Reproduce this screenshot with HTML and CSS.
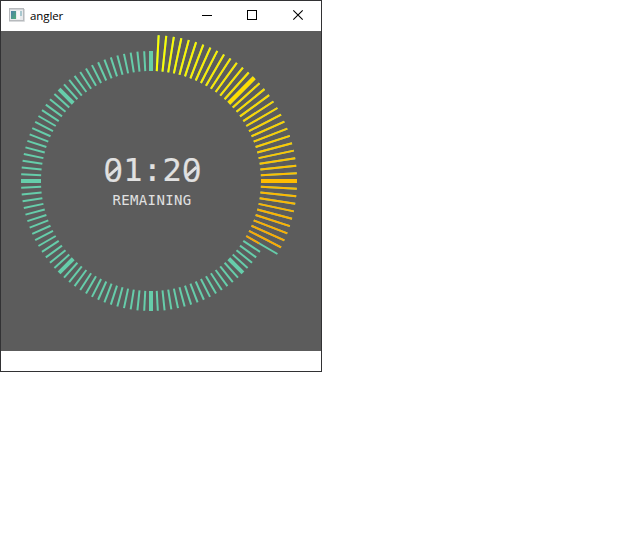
FILE: index.html
```
<!DOCTYPE html>
<html lang="en">
<head>
<meta charset="utf-8">
<title>angler</title>
<link rel="stylesheet" href="styles.css">
</head>
<body>
<div class="window">
  <header class="titlebar">
    <svg class="app-icon" width="16" height="14" viewBox="0 0 16 14">
      <defs><linearGradient id="pane" x1="0" y1="0" x2="1" y2="1"><stop offset="0" stop-color="#4b80a8"/><stop offset="1" stop-color="#50ad78"/></linearGradient></defs>
      <rect x=".5" y=".5" width="14" height="12" fill="#e9ebed" stroke="#b7babd"/>
      <path d="M1 1.5h13" stroke="#cfd2d5"/>
      <rect x="2" y="3" width="5" height="8" fill="url(#pane)"/>
      <rect x="8" y="3" width="3" height="8" fill="#f8f8f8"/>
      <rect x="11" y="3" width="2" height="5" fill="#a9c8cf"/>
      <path d="M0 13.5h15.500V1" fill="none" stroke="#d8dadc"/>
    </svg>
    <span class="title">angler</span>
    <div class="controls">
      <svg width="46" height="30" viewBox="0 0 46 30"><path d="M19 14.500h10" /></svg>
      <svg width="46" height="30" viewBox="0 0 46 30"><path d="M18.500 9.500h9v9h-9z"/></svg>
      <svg width="46" height="30" viewBox="0 0 46 30"><path class="smooth" d="M18.300 9.300l9.400 9.400m0-9.400l-9.400 9.400"/></svg>
    </div>
  </header>
  <main class="dial">
    <svg class="ticks" id="ticks" width="320" height="320" viewBox="0 0 320 320"></svg>
    <div class="readout">
      <div class="time"><span class="zero">0</span><span>1</span><span>:</span><span>2</span><span class="zero">0</span></div>
      <div class="label">REMAINING</div>
    </div>
  </main>
</div>
<script src="ticks.js"></script>
</body>
</html>
```

FILE: styles.css
```
body { margin: 0; background: #fff; }
.window {
  box-sizing: border-box;
  width: 322px;
  height: 372px;
  border: 1px solid #323234;
  background: #fff;
}
.titlebar { display: flex; align-items: center; height: 30px; }
.app-icon { margin: 0 5px 2px 8px; flex: none; }
.title { font: 11.5px/16px "Open Sans", "Noto Sans", sans-serif; color: #000; letter-spacing: -0.1px; }
.controls { display: flex; margin-left: auto; }
.controls path { fill: none; stroke: #000; stroke-width: 1; shape-rendering: crispEdges; }
.controls .smooth { shape-rendering: auto; stroke-width: 1.1; }
.dial { display: grid; width: 320px; height: 320px; background: #5c5c5c; }
.ticks, .readout { grid-area: 1 / 1; }
.tick { stroke: #66cdaa; stroke-width: 2; }
.tick.major { stroke-width: 4; }
.readout { width: 300px; padding-top: 120px; color: #e1e1e1; text-align: center; font-family: "DejaVu Sans Mono", monospace; }
.time { display: flex; justify-content: center; height: 38px; margin-left: 3px; font-size: 32px; line-height: 38px; -webkit-text-stroke: 0.2px #e1e1e1; }
.time span { width: 19.6px; display: flex; justify-content: center; }
.time .zero { position: relative; font-family: "Noto Sans", sans-serif; font-size: 33px; }
.time .zero::after {
  content: "";
  position: absolute;
  left: 3.300px;
  top: 18.500px;
  width: 13px;
  height: 2.500px;
  background: currentColor;
  transform: rotate(-42deg);
}
.label { font-size: 14px; line-height: 20px; letter-spacing: 0.37px; margin: 1px 0 0 2px; }
```

FILE: ticks.js
```
const svg = document.getElementById('ticks');
const CENTER = 150, INNER = 110, OUTER = 130, RAISED = 146;
const STEP = 3, ELAPSED = 120;

function addTick(angle, from, to, color) {
  const rad = angle * Math.PI / 180;
  const line = document.createElementNS('http://www.w3.org/2000/svg', 'line');
  line.setAttribute('x1', CENTER + from * Math.sin(rad));
  line.setAttribute('y1', CENTER - from * Math.cos(rad));
  line.setAttribute('x2', CENTER + to * Math.sin(rad));
  line.setAttribute('y2', CENTER - to * Math.cos(rad));
  line.setAttribute('class', angle % 45 === 0 ? 'tick major' : 'tick');
  if (color) line.style.stroke = color;
  svg.appendChild(line);
}

for (let a = 0; a < 360; a += STEP) {
  const raised = a > 0 && a <= ELAPSED;
  addTick(a, INNER, raised ? RAISED : OUTER);
  if (raised) {
    const color = `rgb(255, ${Math.round(255 - 90 * a / ELAPSED)}, 0)`;
    addTick(a, INNER, a === ELAPSED ? 125 : RAISED, color);
  }
}
```
